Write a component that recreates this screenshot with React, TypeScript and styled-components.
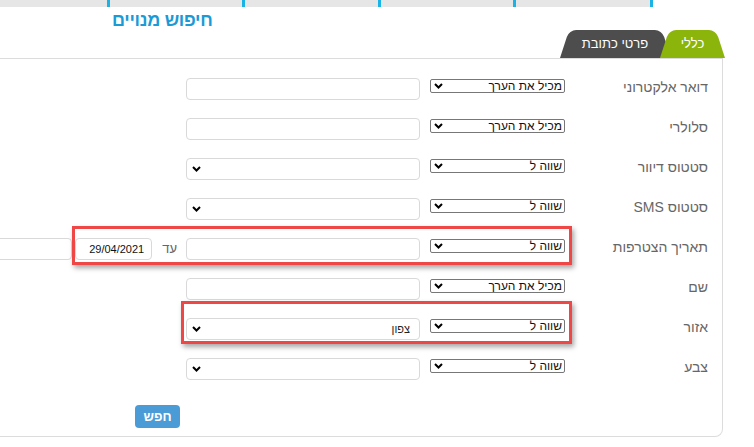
import styled, { createGlobalStyle } from "styled-components";

const GlobalStyle = createGlobalStyle`
    html, body {
        margin: 0;
        padding: 0;
        overflow: hidden;
        background: #fff;
        font-family: "Liberation Sans", Arial, sans-serif;
    }
`;

const Page = styled.div`
    direction: rtl;
    width: 754px;
    height: 447px;
    overflow: hidden;
    position: relative;
`;

const TopBar = styled.div`
    direction: ltr;
    display: flex;
    height: 7px;
`;

const TopCell = styled.div<{ $w: number }>`
    flex: none;
    box-sizing: border-box;
    width: ${props => props.$w}px;
    background: #e6e6e6;
    border-right: 3px solid #1ab3e6;
`;

const Title = styled.h1`
    direction: ltr;
    margin: 0;
    height: 23px;
    box-sizing: border-box;
    padding: 4px 0 0 112px;
    font-size: 18px;
    line-height: 19px;
    font-weight: bold;
    color: #1b9ad6;
    letter-spacing: -0.3px;
`;

const Tabs = styled.div`
    display: flex;
    align-items: flex-end;
    height: 28px;
    padding-right: 29px;
`;

const Tab = styled.div<{ $bg: string; $w: number; $back?: boolean }>`
    position: relative;
    z-index: ${props => (props.$back ? 1 : 2)};
    flex: none;
    width: ${props => props.$w}px;
    height: 28px;
    margin-right: ${props => (props.$back ? "-10px" : "0")};
    color: #fff;
    font-size: 13px;
    line-height: 28px;
    text-align: center;

    &::before, &::after {
        content: "";
        position: absolute;
        top: 0;
        bottom: 0;
        z-index: -1;
        background: ${props => props.$bg};
        transform-origin: bottom;
    }
    &::before {
        left: 0;
        right: 45%;
        border-top-left-radius: 7px;
        transform: skewX(-18deg);
    }
    &::after {
        left: 45%;
        right: 0;
        border-top-right-radius: 7px;
        transform: skewX(18deg);
    }
`;

const Panel = styled.div`
    margin-right: 31px;
    border: 1px solid #dcdcdc;
    border-left: none;
    border-radius: 0 0 8px 0;
    padding: 19px 0 8px 0;
`;

const Rows = styled.div`
    display: flex;
    flex-direction: column;
    gap: 18px;
`;

const Row = styled.div`
    position: relative;
    display: flex;
    align-items: flex-start;
    height: 22px;
    padding-right: 14px;
`;

const Label = styled.div`
    flex: none;
    width: 136px;
    line-height: 19px;
    font-size: 14px;
    color: #666;
    white-space: nowrap;
`;

const OpSelect = styled.div`
    flex: none;
    box-sizing: border-box;
    width: 135px;
    height: 14px;
    margin-right: 7px;
    margin-top: 1px;
    padding: 0 2px 0 3px;
    border: 1px solid #777;
    border-radius: 2px;
    display: flex;
    align-items: center;
    justify-content: space-between;
    font-size: 12px;
    line-height: 12px;
    color: #111;
    white-space: nowrap;
`;

const ValueBox = styled.div`
    flex: none;
    box-sizing: border-box;
    width: 234px;
    height: 22px;
    margin-right: 10px;
    padding: 0 9px 0 5px;
    border: 1px solid #d9d9d9;
    border-radius: 4px;
    display: flex;
    align-items: center;
    justify-content: space-between;
    font-size: 11px;
    color: #222;
`;

const ToLabel = styled.div`
    flex: none;
    margin-right: 9px;
    margin-top: 3px;
    font-size: 13px;
    line-height: 15px;
    color: #666;
`;

const DateBox = styled.div`
    flex: none;
    box-sizing: border-box;
    width: 77px;
    height: 22px;
    margin-right: 10px;
    padding-right: 7px;
    border: 1px solid #d9d9d9;
    border-radius: 4px;
    font-size: 11px;
    line-height: 20px;
    color: #111;
`;

const SpareBox = styled.div`
    flex: none;
    box-sizing: border-box;
    width: 160px;
    height: 22px;
    margin-right: 3px;
    border: 1px solid #d9d9d9;
    border-radius: 4px;
`;

const Highlight = styled.div<{ $left: number; $top: number; $bottom: number }>`
    position: absolute;
    right: 150px;
    left: ${props => props.$left}px;
    top: ${props => props.$top}px;
    bottom: ${props => props.$bottom}px;
    border: 3px solid #ef4646;
    box-shadow: 2px 3px 5px rgba(0, 0, 0, 0.35);
    pointer-events: none;
`;

const Footer = styled.div`
    display: flex;
    margin-top: 25px;
    padding-right: 542px;
`;

const SearchButton = styled.button`
    width: 45px;
    height: 23px;
    padding: 0;
    border: none;
    border-radius: 4px;
    background: #4b9bd6;
    color: #fff;
    font-family: "Liberation Sans", Arial, sans-serif;
    font-size: 13px;
    font-weight: bold;
`;

function Chevron() {
    return (
        <svg width="9" height="6" viewBox="0 0 9 6">
            <path d="M1 1 L4.5 4.5 L8 1" fill="none" stroke="#000" strokeWidth="2" />
        </svg>
    );
}

type Field = {
    label: string;
    op: string;
    dropdown?: boolean;
    value?: string;
    date?: boolean;
    mark?: { left: number; top: number; bottom: number };
};

const fields: Field[] = [
    { label: "דואר אלקטרוני", op: "מכיל את הערך" },
    { label: "סלולרי", op: "מכיל את הערך" },
    { label: "סטטוס דיוור", op: "שווה ל", dropdown: true },
    { label: "סטטוס SMS", op: "שווה ל", dropdown: true },
    { label: "תאריך הצטרפות", op: "שווה ל", date: true, mark: { left: 72, top: -12, bottom: -5 } },
    { label: "שם", op: "מכיל את הערך" },
    { label: "אזור", op: "שווה ל", dropdown: true, value: "צפון", mark: { left: 181, top: -17, bottom: -4 } },
    { label: "צבע", op: "שווה ל", dropdown: true },
];

export default function App() {
    return (
        <Page>
            <GlobalStyle />
            <TopBar>
                <TopCell $w={110} />
                <TopCell $w={135} />
                <TopCell $w={136} />
                <TopCell $w={135} />
                <TopCell $w={137} />
            </TopBar>
            <Title>חיפוש מנויים</Title>

            <Tabs>
                <Tab $bg="#8bb50a" $w={65}>כללי</Tab>
                <Tab $bg="#4d4d4d" $w={110} $back>פרטי כתובת</Tab>
            </Tabs>

            <Panel>
                <Rows>
                    {fields.map(f => (
                        <Row key={f.label}>
                            <Label>{f.label}</Label>
                            <OpSelect>
                                <span>{f.op}</span>
                                <Chevron />
                            </OpSelect>
                            <ValueBox>
                                <span>{f.value}</span>
                                {f.dropdown && <Chevron />}
                            </ValueBox>
                            {f.date && (
                                <>
                                    <ToLabel>עד</ToLabel>
                                    <DateBox>29/04/2021</DateBox>
                                    <SpareBox />
                                </>
                            )}
                            {f.mark && <Highlight $left={f.mark.left} $top={f.mark.top} $bottom={f.mark.bottom} />}
                        </Row>
                    ))}
                </Rows>
                <Footer>
                    <SearchButton>חפש</SearchButton>
                </Footer>
            </Panel>
        </Page>
    );
}
